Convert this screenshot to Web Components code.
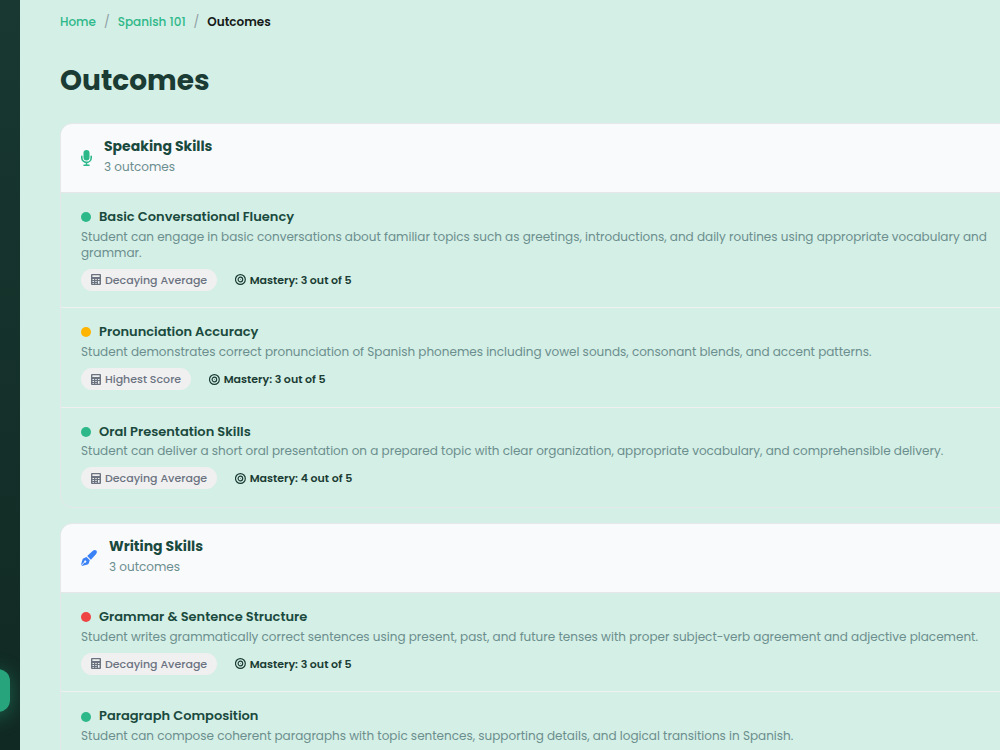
<!DOCTYPE html>
<html lang="en">
<head>
<meta charset="utf-8">
<title>Outcomes</title>
<style>
  html, body {
    height: 100%;
    margin: 0;
    overflow: hidden;
  }

  body {
    background: #d4efe5;
    color: #1a3c34;
    font-family: Poppins, Inter, "Open Sans", sans-serif;
  }
</style>
</head>
<body>
<app-shell>
  <bread-crumb slot="top">
    <span>Home</span>
    <span>Spanish 101</span>
    <span>Outcomes</span>
  </bread-crumb>
  <span slot="title">Outcomes</span>

  <outcome-group icon="mic">
    <span slot="name">Speaking Skills</span>
    <span slot="count">3 outcomes</span>
    <outcome-item color="#2db88a">
      <span slot="name">Basic Conversational Fluency</span>
      <span slot="description">Student can engage in basic conversations about familiar topics such as greetings, introductions, and daily routines using appropriate vocabulary and grammar.</span>
      <span slot="method">Decaying Average</span>
      <span slot="mastery">Mastery: 3 out of 5</span>
    </outcome-item>
    <outcome-item color="#ffb400">
      <span slot="name">Pronunciation Accuracy</span>
      <span slot="description">Student demonstrates correct pronunciation of Spanish phonemes including vowel sounds, consonant blends, and accent patterns.</span>
      <span slot="method">Highest Score</span>
      <span slot="mastery">Mastery: 3 out of 5</span>
    </outcome-item>
    <outcome-item color="#2db88a">
      <span slot="name">Oral Presentation Skills</span>
      <span slot="description">Student can deliver a short oral presentation on a prepared topic with clear organization, appropriate vocabulary, and comprehensible delivery.</span>
      <span slot="method">Decaying Average</span>
      <span slot="mastery">Mastery: 4 out of 5</span>
    </outcome-item>
  </outcome-group>

  <outcome-group icon="pen">
    <span slot="name">Writing Skills</span>
    <span slot="count">3 outcomes</span>
    <outcome-item color="#ef4444">
      <span slot="name">Grammar &amp; Sentence Structure</span>
      <span slot="description">Student writes grammatically correct sentences using present, past, and future tenses with proper subject-verb agreement and adjective placement.</span>
      <span slot="method">Decaying Average</span>
      <span slot="mastery">Mastery: 3 out of 5</span>
    </outcome-item>
    <outcome-item color="#2db88a">
      <span slot="name">Paragraph Composition</span>
      <span slot="description">Student can compose coherent paragraphs with topic sentences, supporting details, and logical transitions in Spanish.</span>
    </outcome-item>
  </outcome-group>
</app-shell>

<script>
const ICONS = {
  mic: `<svg width="11" height="16" viewBox="0 0 11 16" fill="currentColor">
    <rect x="2.5" y="0" width="6" height="10.4" rx="3"/>
    <path d="M.8 6.2v1.5a4.7 4.7 0 0 0 9.4 0V6.2M5.5 12.6v2.4M3 15.2h5" fill="none" stroke="currentColor" stroke-width="1.6" stroke-linecap="round"/>
  </svg>`,
  pen: `<svg width="16" height="16" viewBox="0 0 16 16" fill="currentColor">
    <path d="M6.2 6 11.6 1c1.2-1.2 2.8-1.3 3.7-.4s.8 2.5-.4 3.7L9.9 9.7z"/>
    <path fill-rule="evenodd" d="M5.5 7 8.8 10.3 7.8 13.2c-.2.6-.6 1-1.2 1.2L.9 16l-.3-.3 3.1-3.1a1.1 1.1 0 1 0-.5-.5L.3 15 0 14.7l1.5-5.2c.2-.6.6-1 1.2-1.2z"/>
  </svg>`,
  calc: `<svg width="10" height="11" viewBox="0 0 10 11">
    <path fill="currentColor" fill-rule="evenodd" d="M1 0h8a1 1 0 0 1 1 1v9a1 1 0 0 1-1 1H1a1 1 0 0 1-1-1V1a1 1 0 0 1 1-1zM1.4 1.2v1.9h7.2V1.2zM1.5 5v.9H3V5zM4.3 5v.9h1.4V5zM7 5v.9h1.5V5zM1.5 7.1v.9H3v-.9zM4.3 7.1v.9h1.4v-.9zM7 7.1v2.6h1.5V7.1zM1.5 9v.8H3V9zM4.3 9v.8h1.4V9z"/>
  </svg>`,
  target: `<svg width="11" height="11" viewBox="0 0 11 11" fill="none" stroke="currentColor">
    <circle cx="5.4" cy="5.5" r="4.9" stroke-width="1.2"/>
    <circle cx="5.4" cy="5.5" r="2.3" stroke-width="1.2"/>
    <circle cx="5.4" cy="5.5" r=".4" fill="currentColor" stroke="none"/>
  </svg>`,
};

class BreadCrumb extends HTMLElement {
  constructor() {
    super();
    this.attachShadow({ mode: 'open' });
  }

  connectedCallback() {
    const items = [...this.children];
    items.forEach((item, i) => { item.slot = `step${i}`; });
    this.shadowRoot.innerHTML = `
      <style>
        :host {
          display: block;
          font-size: 12px;
          font-weight: 500;
          line-height: 18px;
        }

        nav {
          display: flex;
          gap: 8px;
        }

        .step {
          color: #2db88a;
        }

        .step:last-child {
          color: #151a18;
          font-weight: 600;
        }

        .sep {
          color: #8d9ca3;
          font-weight: 400;
        }
      </style>
      <nav>
        ${items.map((item, i) => `<span class="step"><slot name="step${i}"></slot></span>`).join('<span class="sep">/</span>')}
      </nav>
    `;
  }
}

class OutcomeItem extends HTMLElement {
  constructor() {
    super();
    this.attachShadow({ mode: 'open' });
  }

  connectedCallback() {
    this.shadowRoot.innerHTML = `
      <style>
        :host {
          border-bottom: 1px solid #f0f0f0;
          display: block;
          padding: 16px 20px 16.5px;
        }

        :host(:last-child) {
          border-bottom-color: transparent;
        }

        .name {
          align-items: center;
          color: #1a4a3e;
          display: flex;
          font-size: 13px;
          font-weight: 600;
          gap: 8px;
          line-height: 16.2px;
          margin-bottom: 3.25px;
        }

        .dot {
          background: ${this.getAttribute('color')};
          border-radius: 50%;
          height: 10px;
          width: 10px;
        }

        .description {
          color: #6b8e8e;
          font-size: 12px;
          line-height: 16px;
          margin-bottom: 8.07px;
        }

        .meta {
          align-items: center;
          display: flex;
          font-size: 11px;
          gap: 17.5px;
          line-height: 14.3px;
        }

        .badge,
        .mastery {
          align-items: center;
          display: flex;
          gap: 4px;
        }

        .badge {
          background: #f0f0f0;
          border-radius: 12px;
          color: #6b7280;
          font-weight: 500;
          padding: 4px 10px;
        }

        .mastery {
          color: #1a3c34;
          font-weight: 600;
        }

        svg {
          display: block;
        }
      </style>
      <div class="name"><span class="dot"></span><slot name="name"></slot></div>
      <div class="description"><slot name="description"></slot></div>
      <div class="meta">
        <span class="badge">${ICONS.calc}<slot name="method"></slot></span>
        <span class="mastery">${ICONS.target}<slot name="mastery"></slot></span>
      </div>
    `;
  }
}

class OutcomeGroup extends HTMLElement {
  constructor() {
    super();
    this.attachShadow({ mode: 'open' });
  }

  connectedCallback() {
    const icon = this.getAttribute('icon');
    this.shadowRoot.innerHTML = `
      <style>
        :host {
          border: 1px solid #e5e7eb;
          border-radius: 12px;
          display: block;
          margin-bottom: 15.35px;
          overflow: hidden;
        }

        header {
          align-items: center;
          background: #f9fafc;
          border-bottom: 1px solid #e5e7eb;
          box-sizing: border-box;
          display: flex;
          gap: 12px;
          height: 68.8px;
          padding: 0 20px;
        }

        .text {
          padding-bottom: 2.8px;
        }

        .icon {
          color: ${icon === 'mic' ? '#2db88a' : '#3b82f6'};
        }

        .name {
          color: #1a4a3e;
          font-size: 14px;
          font-weight: 700;
          line-height: 21px;
        }

        .count {
          color: #6b8e8e;
          font-size: 12px;
          line-height: 20px;
        }

        svg {
          display: block;
        }
      </style>
      <header>
        <span class="icon">${ICONS[icon]}</span>
        <div class="text">
          <div class="name"><slot name="name"></slot></div>
          <div class="count"><slot name="count"></slot></div>
        </div>
      </header>
      <slot></slot>
    `;
  }
}

class AppShell extends HTMLElement {
  constructor() {
    super();
    this.attachShadow({ mode: 'open' }).innerHTML = `
      <style>
        :host {
          display: grid;
          grid-template-columns: 20px 1020px;
          height: 750px;
          overflow: hidden;
        }

        aside {
          background: linear-gradient(180deg, #183831 0%, #112923 100%);
          box-sizing: border-box;
          overflow: hidden;
          padding-top: 669px;
        }

        .active {
          background: #28a47c;
          border-radius: 0 12px 12px 0;
          box-shadow: 0 4px 20px rgba(45, 184, 138, .4);
          height: 43px;
          margin-left: -40px;
          width: 50px;
        }

        main {
          box-sizing: border-box;
          overflow: hidden;
          padding: 13px 0 0 40px;
        }

        h1 {
          color: #1a3c34;
          font-size: 28px;
          font-weight: 700;
          line-height: 42px;
          margin: 29px 0 21.25px;
        }
      </style>
      <aside><div class="active"></div></aside>
      <main>
        <slot name="top"></slot>
        <h1><slot name="title"></slot></h1>
        <slot></slot>
      </main>
    `;
  }
}

customElements.define('app-shell', AppShell);
customElements.define('bread-crumb', BreadCrumb);
customElements.define('outcome-group', OutcomeGroup);
customElements.define('outcome-item', OutcomeItem);
</script>
</body>
</html>
